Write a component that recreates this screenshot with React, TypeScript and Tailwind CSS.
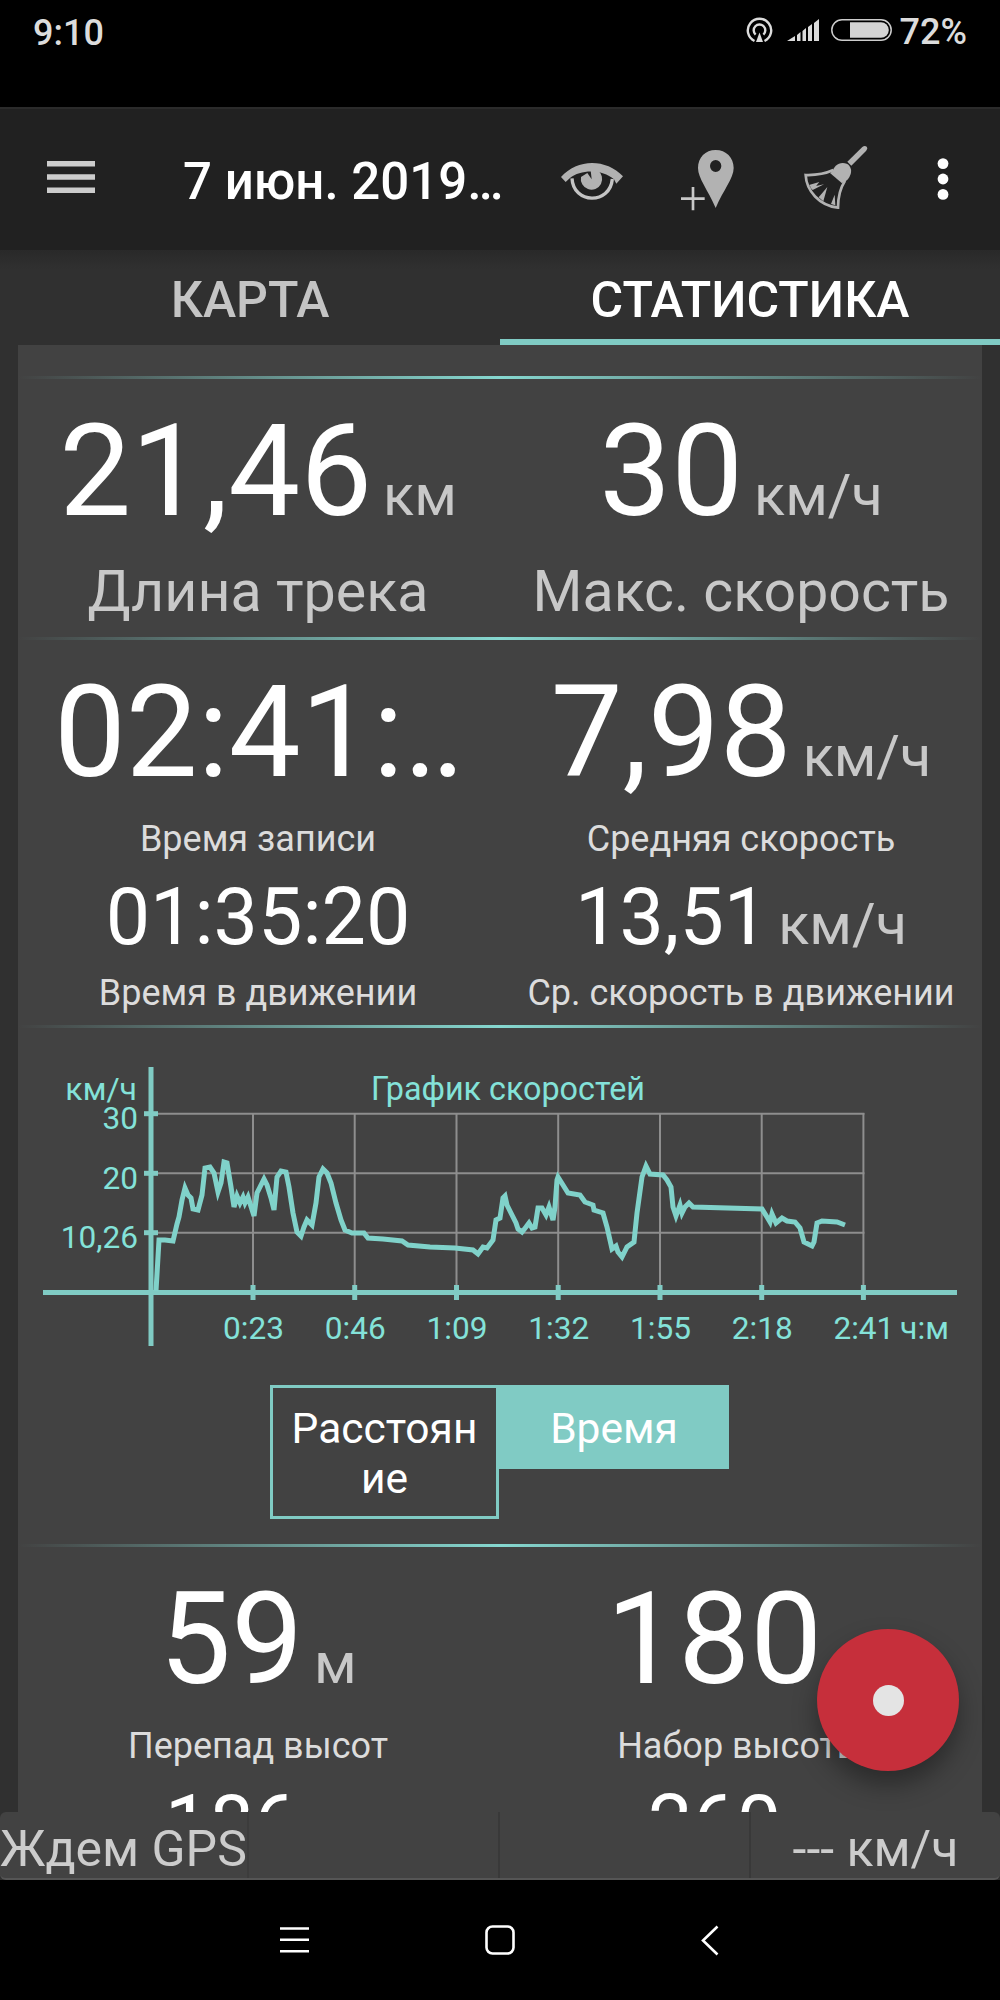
import React from 'react';

const SPEED_POINTS =
    '156,1291 159,1240 165,1240 173,1241 177,1224 179,1217 182,1200 185,1188 188,1195 191,1198 193,1209 198,1210 202,1195 205,1168 210,1167 214,1173 218,1192 221,1183 224,1162 227,1163 231,1187 234,1207 237,1196 240,1203 243,1197 245,1203 248,1197 254,1216 257,1193 260,1187 264,1179 267,1185 271,1198 274,1210 277,1177 281,1171 286,1172 289,1187 293,1213 297,1232 301,1236 304,1227 307,1220 312,1225 316,1203 319,1177 323,1169 327,1173 331,1183 336,1203 341,1220 345,1230 352,1233 364,1233 368,1238 383,1239 402,1241 408,1245 430,1247 455,1248 473,1250 478,1254 483,1247 487,1248 493,1240 496,1220 500,1218 503,1198 505,1196 507,1205 512,1215 516,1223 518,1229 522,1232 526,1227 529,1223 532,1228 535,1227 538,1208 542,1208 546,1215 549,1207 553,1220 555,1207 557,1180 558,1177 563,1185 568,1193 580,1195 585,1202 593,1205 594,1210 603,1213 607,1227 612,1249 616,1246 618,1252 622,1257 627,1247 634,1242 637,1213 642,1177 646,1166 650,1174 663,1175 667,1180 671,1187 673,1207 676,1216 680,1205 682,1213 685,1207 689,1203 693,1207 762,1209 767,1217 770,1222 772,1214 776,1223 782,1218 787,1221 795,1222 800,1228 804,1242 812,1246 814,1242 817,1223 822,1221 837,1222 845,1225';

const TIME_TICKS = [
    { x: 253, label: '0:23' },
    { x: 354.7, label: '0:46' },
    { x: 456.5, label: '1:09' },
    { x: 558.2, label: '1:32' },
    { x: 660, label: '1:55' },
    { x: 761.7, label: '2:18' },
    { x: 863.4, label: '2:41' },
];

const SPEED_TICKS = [
    { y: 1113.7, label: '30' },
    { y: 1173.3, label: '20' },
    { y: 1232.7, label: '10,26' },
];

const Divider: React.FC = () => (
    <div className="h-[3px] bg-linear-to-r from-transparent via-[#86d8d0] to-transparent" />
);

const BigValue: React.FC<{ unit?: string, children: React.ReactNode }> = ({ unit, children }) => (
    <div className="h-[152px] whitespace-nowrap text-center text-[128px] leading-[153px] text-white">
        {children}
        {unit && <span className="ml-[11px] text-[57.5px] leading-none text-[#c8c8c8]">{unit}</span>}
    </div>
);

const SmallValue: React.FC<{ unit?: string, children: React.ReactNode }> = ({ unit, children }) => (
    <div className="h-[94px] whitespace-nowrap text-center text-[79px] leading-[95px] text-white">
        {children}
        {unit && <span className="ml-[10px] text-[57.5px] leading-none text-[#c8c8c8]">{unit}</span>}
    </div>
);

const Label: React.FC<{ children: React.ReactNode }> = ({ children }) => (
    <div className="h-11 whitespace-nowrap text-center text-[36px] leading-[46px] text-[#dcdcdc]">{children}</div>
);

const StatusBar: React.FC = () => (
    <div className="flex h-[107px] items-start justify-between bg-black pl-[33px] pr-[33px] text-[36px] font-medium text-[#dcdcdc]">
        <span className="mt-[10px] leading-[46px]">9:10</span>
        <div className="mt-[10px] flex h-[44px] items-center">
            <svg className="mr-[14px] mt-[-4px] h-[27px] w-[27px]" viewBox="0 0 27 27" fill="none" stroke="#dcdcdc" strokeWidth="2.4">
                <path d="M8.5 24 A11.7 11.7 0 1 1 18.5 24" />
                <path d="M9.6 17.6 A5.8 5.8 0 1 1 17.4 17.6" />
                <path d="M13.5 15.5 L17 25 H10 Z" fill="#dcdcdc" stroke="none" />
            </svg>
            <svg className="mr-3 mt-[-4px] h-[22px] w-8" viewBox="0 0 32 22" fill="#dcdcdc">
                <path d="M0 22 L8 17 V22 Z M10 16 L13.5 13 V22 H10 Z M15.5 12 L19 9 V22 H15.5 Z M21 8 L25 5 V22 H21 Z M27 4 L32 0 V22 H27 Z" />
            </svg>
            <svg className="mr-2 mt-[-4px] h-[22px] w-[61px]" viewBox="0 0 61 22">
                <rect x="0.8" y="0.8" width="59.4" height="20.4" rx="10.2" fill="none" stroke="#cccccc" strokeWidth="1.5" />
                <path d="M19 3.2 H50 A7.8 7.8 0 0 1 50 18.8 H19 Z" fill="#d4d4d4" />
            </svg>
            <span className="leading-[46px]">72%</span>
        </div>
    </div>
);

const Toolbar: React.FC = () => (
    <div className="flex h-[143px] items-center border-t-2 border-[#2b2b2b] bg-[#212121] pl-[47px]">
        <svg className="mt-[-5px] h-8 w-12" viewBox="0 0 48 32" fill="#cccccc">
            <path d="M0 0 H48 V5.5 H0 Z M0 13.2 H48 V18.7 H0 Z M0 26.5 H48 V32 H0 Z" />
        </svg>
        <span className="ml-[88px] mt-[6px] w-[377px] whitespace-nowrap text-[51px] font-medium text-white">7 июн. 2019…</span>
        <svg className="h-[42px] w-[64px]" viewBox="180 476 192 126">
            <path d="M183 530 C232 474 318 474 369 528 L349 550 L342 537 C308 506 242 506 210 533 L197 545 Z" fill="#b2b2b2" />
            <path d="M216 534 C220 612 330 614 337 536" fill="none" stroke="#c4c4c4" strokeWidth="10" />
            <path d="M243 530 L262 518 L275 537 L272 510 H293 A32 32 0 1 1 243 530 Z" fill="#b2b2b2" />
        </svg>
        <svg className="ml-[56px] h-[62px] w-[54px]" viewBox="540 447 162 186">
            <path d="M647 450 C678 450 701 473 701 504 C701 535 670 570 647 624 C624 570 594 535 594 504 C594 473 616 450 647 450 Z M647 480 A17 18 0 1 0 647 516 A17 18 0 1 0 647 480 Z" fill="#b2b2b2" fillRule="evenodd" />
            <path d="M543 596 H614 M579 561 V631" stroke="#c8c8c8" strokeWidth="8" fill="none" />
        </svg>
        <svg className="ml-[70px] mt-[-5px] h-[64px] w-[64px]" viewBox="914 433 192 192" fill="none">
            <path d="M1044 483 L1089 439 Q1096 433 1102 438 Q1106 444 1100 451 L1056 495 Z" fill="#b2b2b2" />
            <path d="M999 514 C1004 498 1014 487 1030 487 Q1044 487 1050 495 Q1058 506 1054 520 C1050 534 1042 541 1031 546 Z" fill="#b2b2b2" />
            <path d="M1002 508 C980 518 950 524 919 523 C921 570 960 615 1016 621 C1016 590 1022 563 1037 540" stroke="#b2b2b2" strokeWidth="8" />
            <path d="M1002 510 L992 517 L1028 548 L1034 541 Z" fill="#b2b2b2" />
            <path d="M929 553 L960 544 L941 567 Z M958 590 L984 559 L972 602 Z M995 610 L1006 582 L1008 614 Z M932 560 L974 551 L940 568 Z" fill="#b2b2b2" />
        </svg>
        <svg className="ml-[69px] mt-[-2px] h-[42px] w-3" viewBox="0 0 12 42" fill="#ffffff">
            <circle cx="6" cy="5.6" r="5.4" />
            <circle cx="6" cy="21" r="5.4" />
            <circle cx="6" cy="36.4" r="5.4" />
        </svg>
    </div>
);

const Tabs: React.FC = () => (
    <div className="grid h-[95px] grid-cols-2 bg-linear-to-b from-[#292929] to-[#303030] to-20% text-center text-[50px] font-medium leading-[100px]">
        <div className="h-[95px] text-[#c4c4c4]">КАРТА</div>
        <div className="h-[95px] border-b-[6px] border-[#80cbc4] text-white">СТАТИСТИКА</div>
    </div>
);

const SpeedChart: React.FC = () => (
    <svg className="block h-[357px] w-[964px]" viewBox="18 1028 964 357" fontSize="31.6" fill="#84e2d9">
        <g stroke="#8e8e8e" strokeWidth="2">
            {SPEED_TICKS.map(tick => <line key={tick.label} x1="151" x2="864.4" y1={tick.y} y2={tick.y} />)}
            {TIME_TICKS.map(tick => <line key={tick.label} x1={tick.x} x2={tick.x} y1="1113" y2="1292" />)}
        </g>
        <g stroke="#80cbc4" strokeWidth="5">
            <line x1="151" x2="151" y1="1067" y2="1346" />
            <line x1="43" x2="957" y1="1292.5" y2="1292.5" />
            {SPEED_TICKS.map(tick => <line key={tick.label} x1="144" x2="158" y1={tick.y} y2={tick.y} />)}
            {TIME_TICKS.map(tick => <line key={tick.label} x1={tick.x} x2={tick.x} y1="1285" y2="1300" />)}
        </g>
        <polyline points={SPEED_POINTS} fill="none" stroke="#80d2ca" strokeWidth="5" />
        <text x="137" y="1100" textAnchor="end" fontSize="32">км/ч</text>
        {SPEED_TICKS.map(tick => <text key={tick.label} x="138" y={tick.y + 15.3} textAnchor="end">{tick.label}</text>)}
        <text x="508" y="1100" textAnchor="middle" fontSize="32.3">График скоростей</text>
        {TIME_TICKS.map(tick => <text key={tick.label} x={tick.x + 0.5} y="1338.5" textAnchor="middle">{tick.label}</text>)}
        <text x="900" y="1338.5" fontSize="32">ч:м</text>
    </svg>
);

const GpsBar: React.FC = () => (
    <div className="bg-[#303030]">
        <div className="flex h-[68px] rounded-md border-b-2 border-[#555555] bg-[#424242] text-[50px] leading-[75px] text-[#cccccc]">
            <div className="w-[249px] whitespace-nowrap border-r-2 border-[#3c3c3c]">Ждем GPS</div>
            <div className="w-[251px] border-r-2 border-[#393939]" />
            <div className="w-[251px] border-r-2 border-[#393939]" />
            <div className="flex-1 text-center">--- км/ч</div>
        </div>
    </div>
);

const NavBar: React.FC = () => (
    <div className="flex h-[120px] items-center bg-black">
        <svg className="ml-[280px] mt-[-1px] h-[26px] w-[29px]" viewBox="0 0 29 26" stroke="#ffffff" strokeWidth="2.6">
            <path d="M0 1.5 H29 M0 12.8 H29 M0 24.2 H29" />
        </svg>
        <svg className="ml-[176px] h-[30px] w-[30px]" viewBox="0 0 30 30" fill="none" stroke="#ffffff" strokeWidth="2.6">
            <rect x="1.5" y="1.5" width="27" height="27" rx="6" />
        </svg>
        <svg className="ml-[186px] h-[31px] w-[18px]" viewBox="0 0 18 31" fill="none" stroke="#ffffff" strokeWidth="2.6">
            <path d="M16.5 1.5 L2 15.5 L16.5 29.5" />
        </svg>
    </div>
);

const App: React.FC = () => {
    return (
        <div className="relative h-[2000px] w-[1000px] overflow-hidden bg-[#303030] font-[Roboto,'Noto_Sans',sans-serif]">
            <StatusBar />
            <Toolbar />
            <Tabs />

            <div className="mx-[18px] h-[1467px] overflow-hidden bg-[#424242] pt-[31px]">
                <Divider />
                <div className="grid grid-cols-2 pb-3 pt-4">
                    <div className="pr-[2px]">
                        <BigValue unit="км">21,46</BigValue>
                        <div className="mt-[11px] h-[67px] text-center text-[57.4px] leading-[68px] text-[#c8c8c8]">Длина трека</div>
                    </div>
                    <div>
                        <BigValue unit="км/ч">30</BigValue>
                        <div className="mt-[11px] h-[67px] text-center text-[57.2px] leading-[68px] text-[#c8c8c8]">Макс. скорость</div>
                    </div>
                </div>

                <Divider />
                <div className="grid grid-cols-2 pb-[11px] pt-4">
                    <div className="pr-[2px]">
                        <BigValue>02:41:<span className="mr-[3px] tracking-[-6px]">..</span></BigValue>
                        <div className="mt-2"><Label>Время записи</Label></div>
                        <div className="mt-[10px]"><SmallValue>01:35:20</SmallValue></div>
                        <div className="mt-[6px]"><Label>Время в движении</Label></div>
                    </div>
                    <div>
                        <BigValue unit="км/ч">7,98</BigValue>
                        <div className="mt-2"><Label>Средняя скорость</Label></div>
                        <div className="mt-[10px]"><SmallValue unit="км/ч">13,51</SmallValue></div>
                        <div className="mt-[6px]"><Label>Ср. скорость в движении</Label></div>
                    </div>
                </div>

                <Divider />
                <SpeedChart />
                <div className="ml-[252px] flex h-[159px] items-start text-center text-[42.5px] leading-[50px] text-white">
                    <div className="h-[134px] w-[229px] break-all border-[3px] border-[#80cbc4] px-4 pt-4">Расстояние</div>
                    <div className="h-[84px] w-[230px] bg-[#80cbc4] pt-[19px]">Время</div>
                </div>

                <Divider />
                <div className="grid grid-cols-2 pt-4">
                    <div className="pr-[2px]">
                        <BigValue unit="м">59</BigValue>
                        <div className="mt-2"><Label>Перепад высот</Label></div>
                        <div className="mt-[10px]"><SmallValue unit="м">186</SmallValue></div>
                    </div>
                    <div>
                        <BigValue unit="м">180</BigValue>
                        <div className="mt-2"><Label>Набор высоты</Label></div>
                        <div className="mt-[10px]"><SmallValue unit="м">260</SmallValue></div>
                    </div>
                </div>
            </div>

            <GpsBar />
            <NavBar />

            <button className="absolute left-[817px] top-[1629px] flex h-[142px] w-[142px] items-center justify-center rounded-full bg-[#c62f3b] shadow-[0_14px_24px_rgba(0,0,0,0.35)]">
                <span className="h-[31px] w-[31px] rounded-full bg-[#e4e4e4]" />
            </button>
        </div>
    );
};

export default App;
